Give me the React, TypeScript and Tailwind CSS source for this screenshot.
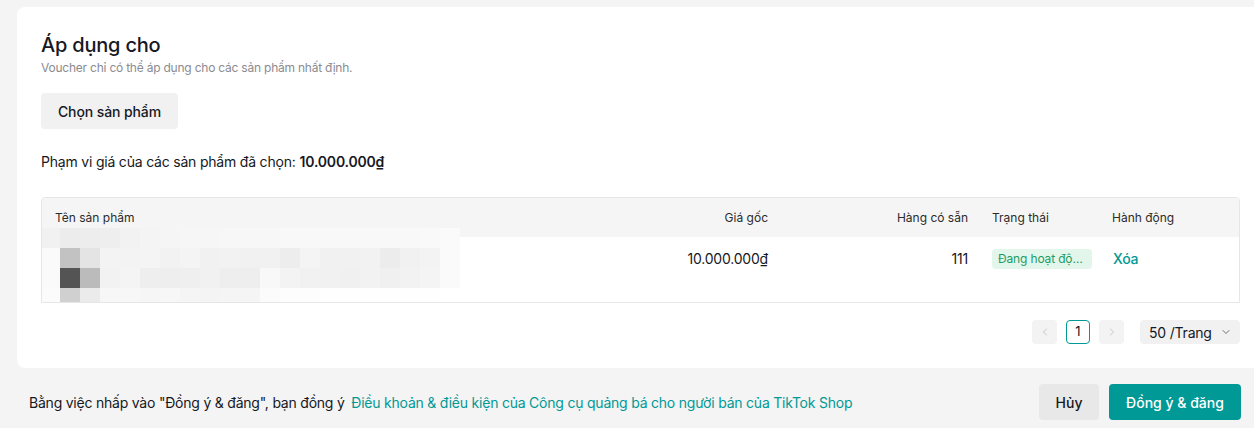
import React from "react";

const blur: string[][] = [
  ["#f1f1f1", "#ececec", "#ededed", "#eeeeee", "#f2f2f2", "#f4f4f4", "#f5f5f5", "#f6f6f6", "#f6f6f6", "#f7f7f7", "#f7f7f7", "#f7f7f7", "#f8f8f8", "#f8f8f8", "#f8f8f8", "#f8f8f8", "#f8f8f8", "#f8f8f8", "#f8f8f8", "#f9f9f9", "#fafafa"],
  ["#fafafa", "#c2c2c2", "#e4e4e4", "#f3f3f3", "#f3f3f3", "#f4f4f4", "#f2f2f2", "#f4f4f4", "#f1f1f1", "#f2f2f2", "#f1f1f1", "#f1f1f1", "#ededed", "#f4f4f4", "#f1f1f1", "#f1f1f1", "#f2f2f2", "#ececec", "#f1f1f1", "#f3f3f3", "#fafafa"],
  ["#fafafa", "#545454", "#bbbbbb", "#f2f2f2", "#f4f4f4", "#eeeeee", "#eeeeee", "#efefef", "#f1f1f1", "#eeeeee", "#eeeeee", "#f8f8f8", "#f3f3f3", "#f1f1f1", "#f1f1f1", "#f0f0f0", "#f2f2f2", "#f0f0f0", "#f2f2f2", "#f4f4f4", "#fafafa"],
  ["#fbfbfb", "#d0d0d0", "#ebebeb", "#f7f7f7", "#f7f7f7", "#f6f6f6", "#f7f7f7", "#f5f5f5", "#f4f4f4", "#f5f5f5", "#f5f5f5", "#fbfbfb", "#fdfdfd", "#fdfdfd", "#fefefe", "#fefefe", "#fefefe", "#fefefe", "#fefefe", "#fefefe", "#ffffff"],
];

function Chevron({ dir }: { dir: "left" | "right" | "down" }) {
  const d = dir === "left" ? "M10 4 6 8l4 4" : dir === "right" ? "M6 4l4 4-4 4" : "M4 6l4 4 4-4";
  return (
    <svg width="12" height="12" viewBox="0 0 16 16" fill="none" stroke="currentColor" strokeWidth="1.3" strokeLinecap="round" strokeLinejoin="round">
      <path d={d} />
    </svg>
  );
}

export default function App() {
  return (
    <div className="min-h-[428px] w-full overflow-hidden bg-[#f4f4f4] pt-[7px] font-['Inter',sans-serif] text-[#1f1f1f]">
      <div className="ml-[17px] rounded-l-lg bg-white pb-[24px] pl-[24px] pr-[14px] pt-[24px]">
        <h2 className="text-[20px] font-medium leading-[28px] tracking-[-0.2px] text-[#161823]">Áp dụng cho</h2>
        <p className="mt-[1px] text-[12px] leading-[16px] tracking-[-0.22px] text-[#8a8b91]">
          Voucher chỉ có thể áp dụng cho các sản phẩm nhất định.
        </p>
        <button className="mt-[17px] h-[36px] w-[137px] rounded-[4px] bg-[#f1f1f2] text-[14px] font-medium tracking-[-0.1px] text-[#161823]">
          Chọn sản phẩm
        </button>
        <p className="mt-[23px] text-[14px] leading-[20px] tracking-[-0.2px] text-[#161823]">
          Phạm vi giá của các sản phẩm đã chọn:<span className="ml-[4px] font-semibold">10.000.000₫</span>
        </p>

        <div className="mt-[25px] overflow-hidden rounded-t-[4px] border border-[#e6e6e6]">
          <div className="flex h-[39px] items-center bg-[#f5f5f5] text-[12px] text-[#2b2b2b]">
            <div className="flex-1 pl-[13px]">Tên sản phẩm</div>
            <div className="w-[200px] pr-[14px] text-right">Giá gốc</div>
            <div className="w-[200px] pr-[14px] text-right">Hàng có sẵn</div>
            <div className="w-[116px] pl-[10px]">Trạng thái</div>
            <div className="w-[141px] pl-[14px]">Hành động</div>
          </div>
          <div className="relative flex h-[65px] items-start pt-[12px] text-[14px] tracking-[-0.2px] text-[#161823]">
            <div className="absolute left-[-2px] top-[-9px] flex flex-col">
              {blur.map((row, r) => (
                <div key={r} className="flex">
                  {row.map((c, i) => (
                    <div key={i} className="h-[20px] w-[20px]" style={{ backgroundColor: c }} />
                  ))}
                </div>
              ))}
            </div>
            <div className="flex-1" />
            <div className="w-[200px] pr-[14px] text-right leading-[20px]">10.000.000₫</div>
            <div className="w-[200px] pr-[14px] text-right leading-[20px]">111</div>
            <div className="w-[116px] pl-[10px]">
              <span className="inline-block h-[20px] w-[100px] truncate rounded-[4px] bg-[#e3f6ec] px-[6px] text-[12px] leading-[20px] tracking-[-0.15px] text-[#1f9b5e]">
                Đang hoạt động
              </span>
            </div>
            <div className="w-[141px] pl-[15px] text-[14px] font-medium leading-[20px] text-[#009995]">Xóa</div>
          </div>
        </div>

        <div className="mt-[17px] flex items-center justify-end gap-[9px] text-[14px]">
          <button className="flex h-[24px] w-[25px] items-center justify-center rounded-[4px] bg-[#f3f3f3] text-[#c4c4c4]">
            <Chevron dir="left" />
          </button>
          <button className="flex h-[24px] w-[24px] items-center justify-center rounded-[4px] border border-[#009995] text-[13px] text-[#161823]">
            1
          </button>
          <button className="flex h-[24px] w-[25px] items-center justify-center rounded-[4px] bg-[#f3f3f3] text-[#c4c4c4]">
            <Chevron dir="right" />
          </button>
          <button className="ml-[7px] flex h-[24px] w-[100px] items-center gap-[8px] rounded-[4px] bg-[#f1f1f2] pl-[9px] text-[14px] tracking-[-0.2px] text-[#161823]">
            50 /Trang
            <span className="text-[#6b6b6b]">
              <Chevron dir="down" />
            </span>
          </button>
        </div>
      </div>

      <div className="flex items-center justify-between pb-[9px] pl-[29px] pr-[13px] pt-[16px] text-[14px]">
        <p className="tracking-[-0.22px] text-[#161823]">
          Bằng việc nhấp vào "Đồng ý &amp; đăng", bạn đồng ý{" "}
          <span className="ml-[3px] text-[#009995]">
            Điều khoản &amp; điều kiện của Công cụ quảng bá cho người bán của TikTok Shop
          </span>
        </p>
        <div className="flex gap-[10px]">
          <button className="h-[36px] w-[60px] rounded-[4px] bg-[#e8e8e9] text-[14px] font-medium text-[#161823]">Hủy</button>
          <button className="h-[36px] w-[132px] rounded-[4px] bg-[#009995] text-[14px] font-medium text-white">
            Đồng ý &amp; đăng
          </button>
        </div>
      </div>
    </div>
  );
}
